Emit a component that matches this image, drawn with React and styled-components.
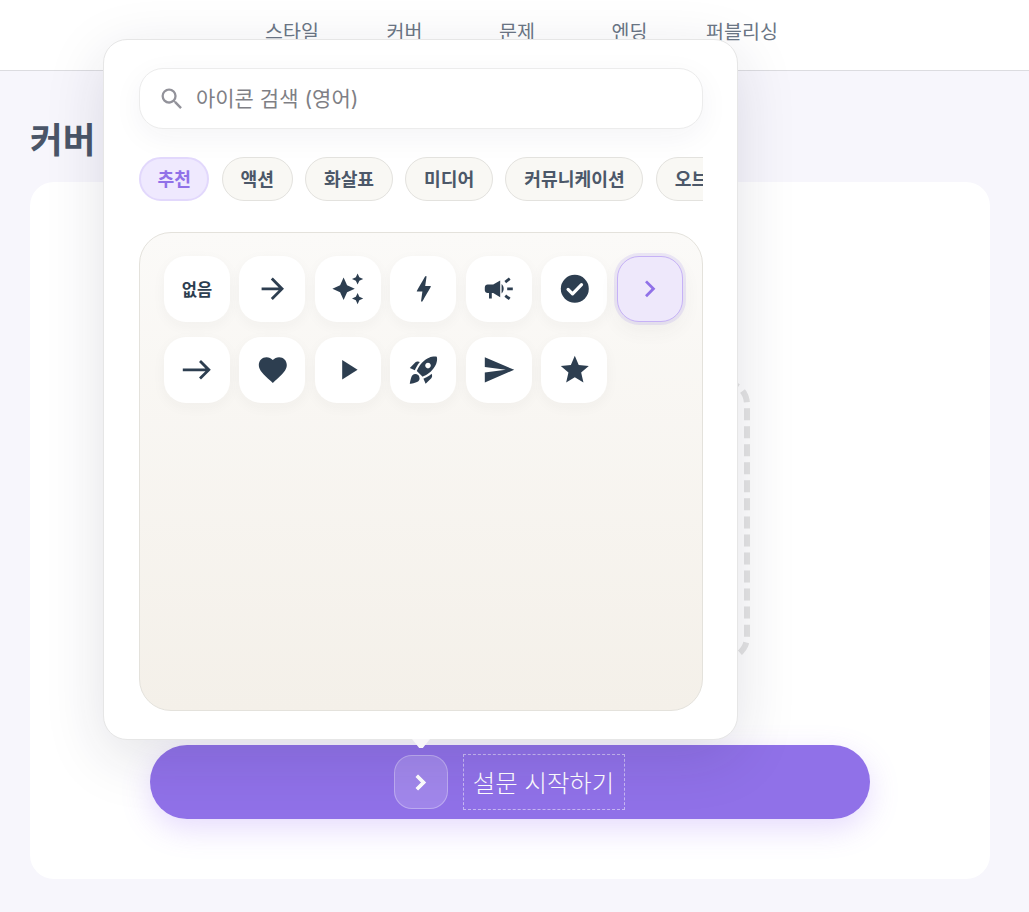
import React from 'react';
import styled, { createGlobalStyle } from 'styled-components';
import {
  MdArrowForward,
  MdAutoAwesome,
  MdBolt,
  MdCampaign,
  MdChevronRight,
  MdEast,
  MdFavorite,
  MdPlayArrow,
  MdRocketLaunch,
  MdSearch,
  MdSend,
  MdStar,
} from 'react-icons/md';

const FONT = 'Inter, "Noto Sans CJK KR", sans-serif';

const GlobalStyle = createGlobalStyle`
  html, body {
    margin: 0;
    padding: 0;
    background: #f7f6fc;
    font-family: ${FONT};
  }
  * {
    box-sizing: border-box;
  }
`;

const Page = styled.div`
  position: relative;
  width: 1029px;
  height: 912px;
  overflow: hidden;
`;

const Header = styled.header`
  height: 71px;
  padding: 0 0 6px 5px;
  background: #fff;
  border-bottom: 1px solid #dcdce0;
  display: flex;
  justify-content: center;
  align-items: center;
`;

const NavItem = styled.div`
  width: 112.5px;
  text-align: center;
  font-size: 19.5px;
  line-height: 28px;
  color: #6b7685;
`;

const Main = styled.main`
  padding: 50px 39px 33px 30px;
`;

const Title = styled.h1`
  margin: 0 0 21px;
  font-size: 35.5px;
  line-height: 40px;
  font-weight: 700;
  color: #4a5568;
`;

const Card = styled.section`
  height: 697px;
  padding: 198px 0 60px;
  background: #fff;
  border-radius: 24px;
  display: flex;
  flex-direction: column;
  align-items: center;
  justify-content: space-between;
`;

const DropZone = styled.div`
  width: 480px;
  height: 281px;
  border: 6px dashed #e4e4e4;
  border-radius: 24px;
`;

const StartButton = styled.div`
  width: 720px;
  height: 74px;
  padding-right: 2px;
  border-radius: 37px;
  background: #9071e8;
  box-shadow: 0 10px 30px rgba(139, 92, 246, 0.22);
  display: flex;
  justify-content: center;
  align-items: center;
  gap: 15px;
`;

const ButtonIcon = styled.div`
  width: 54px;
  height: 54px;
  border-radius: 18px;
  background: rgba(255, 255, 255, 0.16);
  border: 1px solid rgba(255, 255, 255, 0.3);
  color: #fff;
  display: flex;
  justify-content: center;
  align-items: center;
  font-size: 29px;

  path:not([fill='none']) {
    stroke: currentColor;
    stroke-width: 1;
  }
`;

const ButtonLabel = styled.div`
  width: 162px;
  height: 56px;
  padding-bottom: 2px;
  border: 1px dashed rgba(255, 255, 255, 0.5);
  color: #fff;
  font-size: 24.4px;
  font-weight: 300;
  display: flex;
  justify-content: center;
  align-items: center;
  white-space: nowrap;
`;

const Popover = styled.div`
  position: absolute;
  left: 103px;
  top: 39px;
  width: 635px;
  height: 701px;
  padding: 28px 34.3px 28px 35.3px;
  background: #fff;
  border: 1px solid #e6e6e6;
  border-radius: 24px;
  box-shadow: 0 16px 60px rgba(30, 30, 60, 0.13);
  display: flex;
  flex-direction: column;

  &::after {
    content: '';
    position: absolute;
    left: 308px;
    bottom: -9px;
    width: 18px;
    height: 9px;
    background: #f7f6f8;
    clip-path: polygon(0 0, 100% 0, 60% 100%, 40% 100%);
  }
`;

const SearchBox = styled.label`
  flex: none;
  height: 61px;
  padding: 0 20px 0 17.7px;
  background: #fff;
  border: 1px solid #ececec;
  border-radius: 24px;
  box-shadow: 0 8px 30px rgba(40, 40, 70, 0.05);
  display: flex;
  align-items: center;
  gap: 10px;
  font-size: 28px;
  color: #92929a;
`;

const SearchInput = styled.input`
  flex: 1;
  border: 0;
  outline: 0;
  padding: 0;
  background: transparent;
  font-family: ${FONT};
  font-size: 21px;

  &::placeholder {
    color: #7f7f85;
    opacity: 1;
  }
`;

const ChipRow = styled.div`
  flex: none;
  margin-top: 28px;
  display: flex;
  gap: 12.4px;
  overflow: hidden;
`;

const Chip = styled.div`
  flex: none;
  height: 44px;
  padding: 0 ${(p) => (p.$active ? '16.25px' : '17.8px')} 2px;
  border-radius: 22px;
  border: ${(p) => (p.$active ? '2px solid #e2d8fc' : '1px solid #e3e2de')};
  background: ${(p) => (p.$active ? '#efe9fe' : '#f9f8f4')};
  color: ${(p) => (p.$active ? '#9071e8' : '#4c5869')};
  font-size: 18.2px;
  font-weight: 700;
  display: flex;
  align-items: center;
  white-space: nowrap;
`;

const IconPanel = styled.div`
  flex: 1;
  margin-top: 31px;
  padding: 23px 18.7px 24px 23.7px;
  border: 1px solid #e4e2dc;
  border-radius: 32px;
  background: linear-gradient(180deg, #fbfaf8 0%, #f4f0e9 100%);
  display: grid;
  grid-template-columns: repeat(7, 66px);
  grid-auto-rows: 66px;
  justify-content: space-between;
  align-content: start;
  row-gap: 15px;
`;

const IconCell = styled.div`
  border-radius: 22px;
  background: ${(p) => (p.$selected ? '#eee8fb' : '#fff')};
  border: ${(p) => (p.$selected ? '1.5px solid #c6b2f6' : '0')};
  box-shadow: ${(p) =>
    p.$selected
      ? '0 0 0 3px rgba(144, 113, 232, 0.14), 0 8px 20px rgba(60, 60, 60, 0.06)'
      : '0 4px 14px rgba(60, 60, 60, 0.04)'};
  color: ${(p) => (p.$selected ? '#9071e8' : '#2d3e50')};
  display: flex;
  justify-content: center;
  align-items: center;
  font-size: 33.6px;
`;

const NoneLabel = styled.span`
  font-size: 16.5px;
  font-weight: 700;
`;

// tick is rounder and heavier than MdCheckCircle
const CheckBadge = () => (
  <svg width="1em" height="1em" viewBox="0 0 24 24">
    <circle cx="12" cy="12" r="10" fill="currentColor" />
    <path d="M7.2 12.4l3.2 3.2 6.4-6.6" fill="none" stroke="#fff" strokeWidth="2.3" strokeLinecap="round" strokeLinejoin="round" />
  </svg>
);

const NAV = ['스타일', '커버', '문제', '엔딩', '퍼블리싱'];
const CHIPS = ['추천', '액션', '화살표', '미디어', '커뮤니케이션', '오브젝트'];
const ICONS = [
  <NoneLabel>없음</NoneLabel>,
  <MdArrowForward />,
  <MdAutoAwesome />,
  <MdBolt />,
  <MdCampaign />,
  <CheckBadge />,
  <MdChevronRight />,
  <MdEast />,
  <MdFavorite />,
  <MdPlayArrow />,
  <MdRocketLaunch />,
  <MdSend />,
  <MdStar />,
];

const App = () => {
  return (
    <Page>
      <GlobalStyle />
      <Header>
        {NAV.map((item) => (
          <NavItem key={item}>{item}</NavItem>
        ))}
      </Header>
      <Main>
        <Title>커버</Title>
        <Card>
          <DropZone />
          <StartButton>
            <ButtonIcon>
              <MdChevronRight />
            </ButtonIcon>
            <ButtonLabel>설문 시작하기</ButtonLabel>
          </StartButton>
        </Card>
      </Main>
      <Popover>
        <SearchBox>
          <MdSearch />
          <SearchInput placeholder="아이콘 검색 (영어)" />
        </SearchBox>
        <ChipRow>
          {CHIPS.map((chip, index) => (
            <Chip key={chip} $active={index === 0}>
              {chip}
            </Chip>
          ))}
        </ChipRow>
        <IconPanel>
          {ICONS.map((icon, index) => (
            <IconCell key={index} $selected={index === 6}>
              {icon}
            </IconCell>
          ))}
        </IconPanel>
      </Popover>
    </Page>
  );
};

export default App;
